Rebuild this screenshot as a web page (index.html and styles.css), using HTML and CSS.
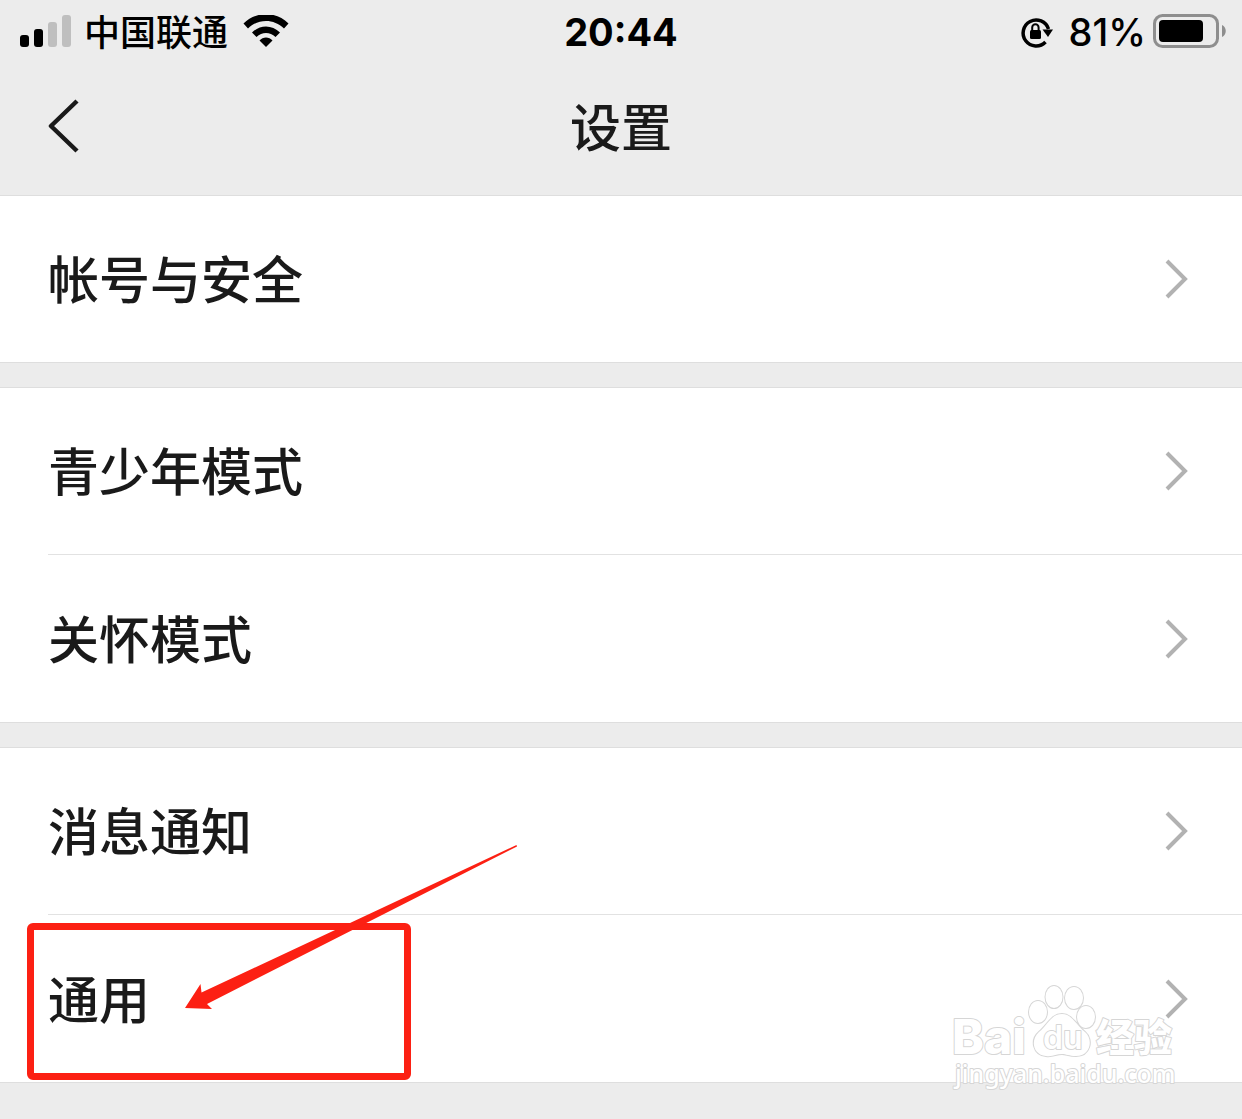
FILE: index.html
```html
<!DOCTYPE html>
<html lang="zh-CN">
<head>
<meta charset="utf-8">
<meta name="viewport" content="width=device-width, initial-scale=1">
<title>设置</title>
<link rel="stylesheet" href="styles.css">
</head>
<body>
<div class="status">
  <div class="status-left">
    <svg class="signal" width="52" height="34" viewBox="0 0 52 34" aria-hidden="true">
      <rect x="0" y="20" width="9" height="12" rx="3"/>
      <rect x="14" y="14" width="9" height="18" rx="3"/>
      <rect class="off" x="28" y="7" width="9" height="25" rx="3"/>
      <rect class="off" x="42" y="0" width="9" height="32" rx="3"/>
    </svg>
    <span class="carrier">中国联通</span>
    <svg class="wifi" width="46" height="34" viewBox="0 0 46 34" aria-hidden="true">
      <path d="M0.500 8.500C13-4 33-4 45.500 8.500L41 13.500C31 3.500 15 3.500 5 13.500Z"/>
      <path d="M9 17.500C17 9.500 29 9.500 37 17.500L32.500 22C27 16.500 19 16.500 13.500 22Z"/>
      <path d="M16.500 25.500C20 21.500 26 21.500 29.500 25.500L23 32Z"/>
    </svg>
  </div>
  <time class="clock">20:44</time>
  <div class="status-right">
    <svg width="34" height="34" viewBox="0 0 34 34" aria-hidden="true">
      <path d="M25.500 27A13 13 0 1 1 28.500 14" fill="none" stroke="#000" stroke-width="3.500"/>
      <path d="M22.500 14.500H33L28 22Z"/>
      <rect x="10" y="15" width="11" height="9" rx="1.500"/>
      <path d="M12.200 16V12.500a3.200 3.200 0 0 1 6.400 0V16" fill="none" stroke="#000" stroke-width="2"/>
    </svg>
    <span class="percent">81%</span>
    <svg class="battery" width="74" height="36" viewBox="0 0 74 36" aria-hidden="true">
      <rect x="2.500" y="1.500" width="63" height="31" rx="8" fill="none" stroke="#8e8e8e" stroke-width="3"/>
      <rect x="7" y="6" width="44" height="22" rx="4"/>
      <path d="M70 11c5 2 5 10 0 12Z" fill="#8e8e8e"/>
    </svg>
  </div>
</div>

<header class="nav">
  <button class="back" type="button" aria-label="返回">
    <svg width="32" height="56" viewBox="0 0 32 56"><path d="M29 3L3 28L29 53" fill="none" stroke="#1a1a1a" stroke-width="4.500" stroke-linejoin="round"/></svg>
  </button>
  <h1 class="title">设置</h1>
</header>

<main class="groups">
  <ul class="group">
    <li class="item"><a class="row" href="#account"><span class="label">帐号与安全</span><svg class="chevron" viewBox="0 0 24 40"><path d="M2 2L20 20L2 38"/></svg></a></li>
  </ul>
  <ul class="group">
    <li class="item"><a class="row" href="#teen"><span class="label">青少年模式</span><svg class="chevron" viewBox="0 0 24 40"><path d="M2 2L20 20L2 38"/></svg></a></li>
    <li class="item"><a class="row" href="#care"><span class="label">关怀模式</span><svg class="chevron" viewBox="0 0 24 40"><path d="M2 2L20 20L2 38"/></svg></a></li>
  </ul>
  <ul class="group">
    <li class="item"><a class="row" href="#notifications"><span class="label">消息通知</span><svg class="chevron" viewBox="0 0 24 40"><path d="M2 2L20 20L2 38"/></svg></a></li>
    <li class="item">
      <a class="row" href="#general"><span class="label">通用</span><svg class="chevron" viewBox="0 0 24 40"><path d="M2 2L20 20L2 38"/></svg></a>
      <div class="highlight"></div>
      <svg class="arrow" width="334" height="166" viewBox="0 0 334 166" aria-hidden="true">
        <path d="M0 163L15.500 139L16.500 147.500L331.500 0L332 1.500L22 159L27 164Z"/>
      </svg>
      <svg class="watermark" width="240" height="120" viewBox="0 0 240 120" role="img" aria-label="Baidu 经验">
        <g class="wm-shape">
          <ellipse cx="88" cy="32" rx="9" ry="11"/>
          <ellipse cx="104" cy="17" rx="8.500" ry="11"/>
          <ellipse cx="124" cy="18" rx="9" ry="11"/>
          <ellipse cx="136" cy="37" rx="9" ry="11"/>
          <path d="M112 34C122 34 126 45 135 52C144 60 140 76 126 76C119 76 116 74 112 74C106 74 103 77 96 76C83 75 80 60 89 52C98 45 101 34 112 34Z"/>
        </g>
        <text class="wm-brand" x="2" y="74">Bai</text>
        <text class="wm-du" x="93" y="69">du</text>
        <text class="wm-cjk" x="146" y="71">经验</text>
        <text class="wm-url" x="5" y="103">jingyan.baidu.com</text>
      </svg>
    </li>
  </ul>
</main>
</body>
</html>
```
FILE: styles.css
```css
* { box-sizing: border-box; }

body {
  min-height: 100vh;
  margin: 0;
  background: #ececec;
  color: #1a1a1a;
  font-family: Inter, "Noto Sans CJK SC", sans-serif;
}

svg { display: block; flex: none; }

.status {
  display: grid;
  grid-template-columns: 1fr auto 1fr;
  align-items: center;
  height: 62px;
  padding: 0 16px;
  color: #000;
  font-size: 38px;
  line-height: 60px;
}

.status-left,
.status-right {
  display: flex;
  align-items: center;
}

.status-left { padding-left: 4px; }
.status-right { justify-content: flex-end; }
.signal .off { fill: #bfbfbf; }

.carrier {
  margin: 0 15px 0 12px;
  padding-top: 3px;
  font-size: 36px;
  font-weight: 500;
}

.clock { font-weight: 700; }
.percent { margin: 0 6px 0 15px; font-weight: 500; }

.nav {
  display: grid;
  grid-template-columns: 1fr auto 1fr;
  align-items: center;
  height: 133px;
  padding: 0 48px;
}

.back {
  justify-self: start;
  padding: 0 0 6px;
  border: 0;
  background: none;
}

.title {
  margin: 0;
  font-size: 51px;
  font-weight: 500;
  line-height: 72px;
}

.groups {
  display: grid;
  gap: 24px;
}

.group {
  margin: 0;
  padding: 0;
  border: solid #dedede;
  border-width: 1px 0;
  background: #fff;
  list-style: none;
}

.item {
  position: relative;
  padding-left: 48px;
}

.row {
  display: flex;
  align-items: center;
  justify-content: space-between;
  height: 166px;
  padding-right: 53px;
  color: inherit;
  font-size: 51px;
  font-weight: 500;
  text-decoration: none;
}

.item + .item .row {
  height: 168px;
  border-top: 1px solid #e2e2e2;
}

.label { padding-bottom: 4px; }

.chevron {
  width: 24px;
  height: 40px;
  fill: none;
  stroke: #b2b2b2;
  stroke-width: 4;
}

.highlight,
.arrow,
.watermark {
  position: absolute;
  pointer-events: none;
}

.highlight {
  top: 9px;
  left: 27px;
  width: 384px;
  height: 157px;
  border: 7px solid #fc2013;
  border-radius: 6px;
}

.arrow {
  top: -69px;
  left: 185px;
  fill: #fc2013;
}

.watermark {
  top: 66px;
  right: 52px;
  overflow: visible;
}

.wm-shape,
.watermark text {
  fill: #fff;
  stroke: #d6d6d6;
  stroke-width: 2;
  stroke-linejoin: round;
  paint-order: stroke;
}

.watermark .wm-brand { font-size: 48px; font-weight: 800; }
.watermark .wm-du { font-size: 32px; font-weight: 600; }
.watermark .wm-cjk { font-size: 38px; font-weight: 900; }
.watermark .wm-url { font-family: "Noto Sans", sans-serif; font-size: 25px; font-weight: 500; }
```
